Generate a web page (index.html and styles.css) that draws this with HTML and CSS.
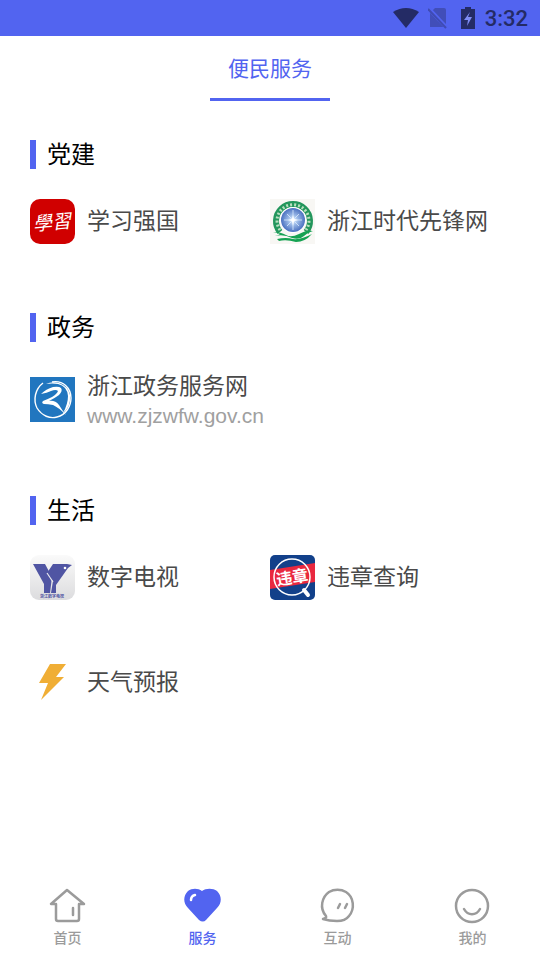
FILE: index.html
```html
<!DOCTYPE html>
<html lang="zh-CN">
<head>
  <meta charset="UTF-8" />
  <meta name="viewport" content="width=device-width, initial-scale=1" />
  <title>便民服务</title>
  <link rel="stylesheet" href="styles.css">
</head>
<body>
  <div class="status-bar">
    <svg width="26" height="22" viewBox="0 0 26 22" fill="#242b65"><path d="M0 5Q13-3 26 5L13 21Z"/></svg>
    <svg class="no-sim" width="20" height="22" viewBox="0 0 20 22">
      <path d="M7 1h9q2 0 2 2v17H2V6Z" fill="#414eb9"/>
      <path d="M1 2l18 19" stroke="#5264f0" stroke-width="4"/>
      <path d="M0 2l18 19" stroke="#3f4bb4" stroke-width="2"/>
    </svg>
    <svg class="battery" width="14" height="22" viewBox="0 0 14 22">
      <path d="M4 0h6v2h4v20H0V2h4Z" fill="#242b65"/>
      <path d="M9 5L3 13h4l-1 6 5-9H7Z" fill="#7f8df5"/>
    </svg>
    <span class="time">3:32</span>
  </div>

  <header class="tabs">
    <h1 class="tab">便民服务</h1>
  </header>

  <main class="content">
    <section class="section">
      <h2 class="section-title">党建</h2>
      <div class="items">
        <a class="item" href="#">
          <svg class="item-icon" viewBox="0 0 45 45">
            <rect width="45" height="45" rx="10" fill="#d00000"/>
            <text class="script-text" x="3" y="30" transform="rotate(-5 22 24)">學習</text>
          </svg>
          <span class="item-name">学习强国</span>
        </a>
        <a class="item" href="#">
          <svg class="item-icon" viewBox="0 0 45 45">
            <defs>
              <radialGradient id="globe"><stop offset="0" stop-color="#e4f2ff"/><stop offset=".4" stop-color="#9dbbe8"/><stop offset="1" stop-color="#4a70c0"/></radialGradient>
            </defs>
            <rect width="45" height="45" fill="#f8f7f4"/>
            <path d="M10 33A17 17 0 1 1 36 33" fill="none" stroke="#23965c" stroke-width="6"/>
            <path d="M10 31A16 16 0 1 1 36 31" fill="none" stroke="#b9dfbf" stroke-width="3" stroke-dasharray="2 2"/>
            <circle cx="23" cy="21" r="13" fill="#fff"/>
            <circle cx="23" cy="21" r="12" fill="url(#globe)"/>
            <path d="M23 11v20M14 21h18M17 15l12 12M29 15L17 27" stroke="#dcecff" stroke-width=".8"/>
            <path d="M23 16l1 4 4 1-4 1-1 5-1-5-4-1 4-1Z" fill="#fff"/>
            <path d="M3 33q8 0 13 3t13-1q7-4 14-3-5 1-9 5t-12 2q-8-4-17-2 4-1 5-2-2-1-7-2Z" fill="#15a252"/>
            <path d="M7 40q9-2 16 0 8 1 19-5-7 8-16 8-10-3-17-1Z" fill="#15a252"/>
          </svg>
          <span class="item-name">浙江时代先锋网</span>
        </a>
      </div>
    </section>

    <section class="section">
      <h2 class="section-title">政务</h2>
      <div class="items">
        <a class="item item-wide" href="#">
          <svg class="item-icon" viewBox="0 0 45 45">
            <rect width="45" height="45" fill="#2176bf"/>
            <path d="M13 6C5 12 3 23 7 31c5 8 13 11 20 9 9-2 14-11 14-19C41 11 33 3 22 5" fill="none" stroke="#fff" stroke-width="1.4"/>
            <path d="M16 7q6-3 13-1 9 3 11 12 1 12-7 18 5-9 5-17Q37 9 28 7q-6-1-12 0Z" fill="#fff"/>
            <path d="M11 17q5-5 12-7 6-1 8 1 2 3-2 7-4 3-10 6 6-1 10 4 3 5 7 10-8-8-13-10-5-1-9-1-3-1-1-3 5-2 9-4 5-3 6-6-2-2-7 0-4 2-10 3Z" fill="#fff"/>
          </svg>
          <span class="item-text">
            <span class="item-name">浙江政务服务网</span>
            <span class="item-url">www.zjzwfw.gov.cn</span>
          </span>
        </a>
      </div>
    </section>

    <section class="section">
      <h2 class="section-title">生活</h2>
      <div class="items">
        <a class="item" href="#">
          <svg class="item-icon" viewBox="0 0 45 45">
            <defs>
              <linearGradient id="tile" x2="0" y2="1"><stop offset="0" stop-color="#fafafa"/><stop offset="1" stop-color="#dcdcde"/></linearGradient>
            </defs>
            <rect width="45" height="45" rx="9" fill="url(#tile)"/>
            <path d="M3 9h12l7 13-2 16h-6v-9Z" fill="#5055a3"/>
            <path d="M17 18l6-9h14l5 1-4 3-12 17v8h-5l2-12Z" fill="#5055a3"/>
            <path d="M17 18l6 9" stroke="#e9e9ee" stroke-width="1.2"/>
            <circle cx="35" cy="13" r="1.3" fill="#fff"/>
            <text class="tiny-text" x="22" y="43">浙江数字电视</text>
          </svg>
          <span class="item-name">数字电视</span>
        </a>
        <a class="item" href="#">
          <svg class="item-icon" viewBox="0 0 45 45">
            <defs><clipPath id="badge"><rect width="45" height="45" rx="5"/></clipPath></defs>
            <g clip-path="url(#badge)">
              <rect width="45" height="45" fill="#12408a"/>
              <path d="M0 15L45 8v19L0 34Z" fill="#e9283f"/>
            </g>
            <circle cx="22" cy="22" r="18" fill="none" stroke="#fff" stroke-width="1.5"/>
            <path d="M34 35l4 5" stroke="#fff" stroke-width="4" stroke-linecap="round"/>
            <text class="badge-text" x="6" y="28" transform="rotate(-9 22 22)">违章</text>
          </svg>
          <span class="item-name">违章查询</span>
        </a>
        <a class="item" href="#">
          <svg class="item-icon" viewBox="0 0 45 45"><path d="M20 4h16L26 17h8L11 40l7-17H9Z" fill="#f0ae35"/></svg>
          <span class="item-name">天气预报</span>
        </a>
      </div>
    </section>
  </main>

  <nav class="bottom-nav">
    <a class="nav-item" href="#">
      <svg class="nav-icon" viewBox="0 0 38 36">
        <path d="M18 2L2 16h5v15q0 2 2 2h19q2 0 2-2V16h5Z"/>
        <path d="M24 20v7"/>
      </svg>
      <span>首页</span>
    </a>
    <a class="nav-item active" href="#">
      <svg class="nav-icon" viewBox="0 0 38 36">
        <path class="heart" d="M18 3C22 0 29 0 33 3c5 5 5 12 0 17L22 32q-3 3-7 0L4 20c-5-5-5-12 0-17 4-3 10-3 14 0Z"/>
        <path class="shine" d="M7 12q0-4 4-5"/>
      </svg>
      <span>服务</span>
    </a>
    <a class="nav-item" href="#">
      <svg class="nav-icon" viewBox="0 0 38 36">
        <path d="M4 31q4-1 3-3C0 20 3 9 10 4c5-3 12-3 17 0 8 5 9 17 3 24-3 4-8 5-12 5q-8 0-14-2Z"/>
        <path d="M21 16l-2 4M28 16l-2 4"/>
      </svg>
      <span>互动</span>
    </a>
    <a class="nav-item" href="#">
      <svg class="nav-icon" viewBox="0 0 38 36">
        <circle cx="18" cy="18" r="16"/>
        <path d="M10 21c4 7 12 7 16 0"/>
      </svg>
      <span>我的</span>
    </a>
  </nav>
</body>
</html>
```

FILE: styles.css
```css
body {
  margin: 0;
  min-height: 100vh;
  background-color: #fff;
  font-family: 'Noto Sans CJK SC', sans-serif;
  display: flex;
  flex-direction: column;
}

a {
  color: inherit;
  text-decoration: none;
}

.status-bar {
  height: 36px;
  padding: 0 12px;
  background-color: #5264f0;
  display: flex;
  align-items: center;
  justify-content: flex-end;
}

.no-sim {
  margin-left: 9px;
}

.battery {
  margin: 0 10px 0 13px;
}

.time {
  font-family: Roboto, sans-serif;
  font-size: 22px;
  font-weight: 500;
  color: #242b65;
}

.tabs {
  display: flex;
  justify-content: center;
}

.tab {
  box-sizing: border-box;
  width: 120px;
  height: 65px;
  margin: 0;
  border-bottom: 3px solid #5264f0;
  font-size: 21px;
  font-weight: 400;
  line-height: 62px;
  text-align: center;
  color: #5264f0;
}

.content {
  flex: 1;
  padding: 39px 30px 0;
}

.section {
  margin-bottom: 69px;
}

.section-title {
  margin: 0 0 30px;
  padding: 0 0 4px 11px;
  border-left: 6px solid #5264f0;
  font-size: 24px;
  font-weight: 400;
  line-height: 25px;
  color: #000;
}

.items {
  display: grid;
  grid-template-columns: 1fr 1fr;
  row-gap: 60px;
}

.item {
  display: flex;
  align-items: center;
  gap: 12px;
  color: #4a4a4a;
}

.item-wide {
  grid-column: 1 / 3;
}

.item-icon {
  width: 45px;
  height: 45px;
  flex-shrink: 0;
}

.item-text {
  display: flex;
  flex-direction: column;
}

.item-name {
  padding-bottom: 5px;
  font-size: 23px;
  line-height: 24px;
}

.item-url {
  padding-top: 4px;
  font-family: 'Liberation Sans', sans-serif;
  font-size: 21px;
  line-height: 22px;
  color: #a0a0a0;
}

.script-text {
  font-family: 'Noto Sans CJK TC', sans-serif;
  font-size: 19px;
  font-style: italic;
  fill: #fff;
}

.tiny-text {
  font-size: 4px;
  font-weight: 700;
  text-anchor: middle;
  fill: #5055a3;
}

.badge-text {
  font-size: 16px;
  font-weight: 700;
  fill: #fff;
}

.bottom-nav {
  display: flex;
  padding-bottom: 12px;
}

.nav-item {
  flex: 1;
  display: flex;
  flex-direction: column;
  align-items: center;
  gap: 2px;
  font-size: 14px;
  font-weight: 500;
  line-height: 22px;
  color: #9b9b9b;
}

.nav-item.active {
  color: #5264f0;
}

.nav-icon {
  width: 38px;
  height: 36px;
  fill: none;
  stroke: #9b9b9b;
  stroke-width: 2.5;
  stroke-linecap: round;
  stroke-linejoin: round;
}

.nav-icon .heart {
  fill: #5264f0;
  stroke: none;
}

.nav-icon .shine {
  stroke: #fff;
}
```
